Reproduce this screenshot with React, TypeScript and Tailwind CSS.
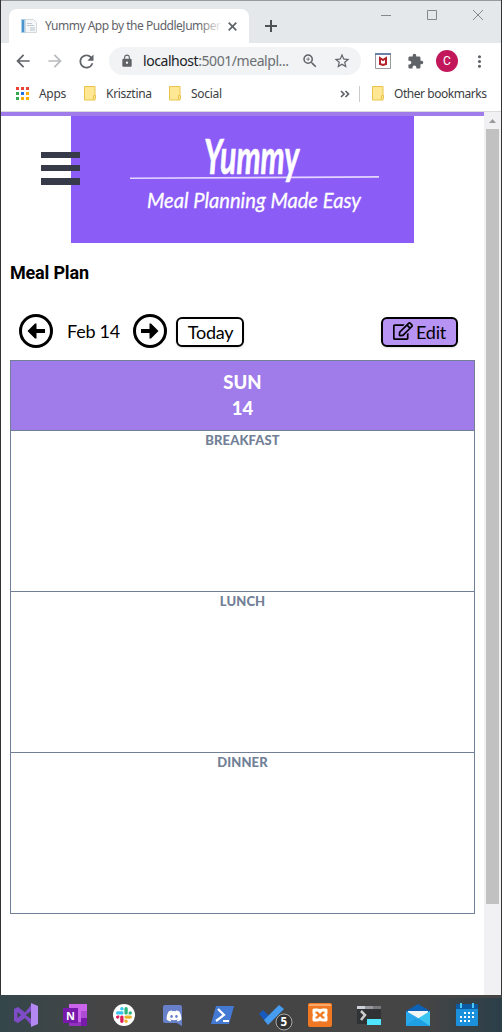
import React from "react";
import { FaDiscord, FaRegEdit } from "react-icons/fa";
import { MdLock, MdArrowBack, MdArrowForward, MdRefresh, MdZoomIn, MdStarBorder, MdMoreVert, MdExtension } from "react-icons/md";

const appColors = ["bg-[#ea4335]", "bg-[#ea4335]", "bg-[#ea4335]", "bg-[#34a853]", "bg-[#1a73e8]", "bg-[#fbad04]", "bg-[#34a853]", "bg-[#fbad04]", "bg-[#fbad04]"];

const slackColors = ["#36c5f0", "#2eb67d", "#ecb22e", "#e01e5a"];

function Folder() {
  return (
    <svg width="13" height="15" viewBox="0 0 13 15" className="shrink-0">
      <path d="M.5.5h10.500v13.500h-10.500z" fill="#ffe793" stroke="#e9c34b" />
      <path d="M9.500 9.500h2v3l-1 1h-1z" fill="#ffe793" stroke="#e9c34b" />
    </svg>
  );
}

function TitleBar() {
  return (
    <div className="flex h-[43px] border-t border-[#96999d] bg-[#e4e8eb]">
      <div className="ml-2 mt-2 flex h-[34px] w-[240px] items-center rounded-t-lg bg-white pl-[12px]">
        <svg width="16" height="16" viewBox="0 0 16 16" className="shrink-0">
          <path d="M0 1h5v14H0z" fill="#a9cfea" />
          <path d="M1 2h2v12H1z" fill="#4b95cc" />
          <path d="M4.500 1.500h8l3 3v10h-11z" fill="#f5f6f8" stroke="#d3d8dd" />
          <path d="M6 5.500h5M6 7.500h7" stroke="#c3cad1" />
          <path d="M9 9h5v4H9z" fill="#d4dce4" />
        </svg>
        <div className="relative ml-2 w-[178px] shrink-0">
          <svg width="178" height="16" className="block"><text x="0" y="12" textLength="176" fill="#5f6368" fontSize="12">Yummy App by the PuddleJumper</text></svg>
          <div className="absolute inset-y-0 right-0 w-6 bg-linear-to-r from-transparent to-white" />
        </div>
        <svg width="9" height="9" viewBox="0 0 9 9" className="ml-[5px] shrink-0" stroke="#5f6368" strokeWidth="1.700"><path d="M.7.7l7.600 7.600M8.300.7L.7 8.300" /></svg>
      </div>
      <svg width="12" height="12" viewBox="0 0 12 12" className="ml-[16px] mt-[19px] shrink-0" stroke="#4d5156" strokeWidth="2"><path d="M6 0v12M0 6h12" /></svg>
      <svg width="104" height="12" viewBox="0 0 104 12" className="ml-[104px] mt-[8px] shrink-0" fill="none" stroke="#85888b">
        <path d="M0 6.500h10M46.500 1.500h9v9h-9zM92 1l10 10M102 1l-10 10" />
      </svg>
    </div>
  );
}

function AddressBar() {
  return (
    <div className="flex h-[37px] items-center bg-white pb-px text-[#5f6368]">
      <MdArrowBack className="ml-[12px] size-[20px]" />
      <MdArrowForward className="ml-[12px] size-[20px] text-[#b8babd]" />
      <MdRefresh className="ml-[11px] size-[21px]" />
      <div className="ml-[12px] flex h-7 w-[252px] items-center rounded-full bg-[#f1f3f4]">
        <MdLock className="ml-[11px] size-[14px]" />
        <svg width="148" height="20" className="ml-[9px]"><text x="0" y="15" fontSize="14" textLength="146" fill="#6b6f73"><tspan fill="#202124">localhost</tspan>:5001/mealpl...</text></svg>
        <MdZoomIn className="ml-[10px] size-[18px]" />
        <MdStarBorder className="ml-[14px] size-[18px]" />
      </div>
      <svg width="16" height="16" viewBox="0 0 16 16" className="ml-[14px]">
        <path d="M.5.5h15v15H.5z" fill="#fff" stroke="#96999d" /><path d="M0 0h16v2H0z" fill="#6b82a8" />
        <path d="M5 5l3 2 3-2v6l-3 1-3-1z" fill="none" stroke="#b3222a" strokeWidth="2" />
      </svg>
      <MdExtension className="ml-[16px] size-[17px]" />
      <div className="ml-[12px] flex size-[22px] items-center justify-center rounded-full bg-[#c2185b] font-[Roboto] text-[12px] text-white">C</div>
      <MdMoreVert className="ml-[12px] size-[19px]" />
    </div>
  );
}

function Bookmarks() {
  return (
    <div className="flex h-[32px] items-center border-b border-[#d9dbdc] bg-white pb-[4px] text-[12px] text-[#3c4043]">
      <div className="ml-[15px] grid grid-cols-3 gap-[2px]">{appColors.map((c, i) => <i key={i} className={`size-[3px] ${c}`} />)}</div>
      <span className="ml-[10px] w-[27px] tracking-[-0.3px]">Apps</span>
      <div className="ml-[18px]"><Folder /></div><span className="ml-[9px] w-[45px] tracking-[-0.3px]">Krisztina</span>
      <div className="ml-[18px]"><Folder /></div><span className="ml-[9px] w-[32px] tracking-[-0.3px]">Social</span>
      <svg width="10" height="8" viewBox="0 0 10 8" className="ml-[117px]" fill="none" stroke="#5f6368" strokeWidth="1.700"><path d="M1 1l3 3-3 3M5.500 1l3 3-3 3" /></svg>
      <div className="ml-[9px] h-4 w-px bg-[#c8cacd]" />
      <div className="ml-[12px]"><Folder /></div><span className="ml-[9px] whitespace-nowrap tracking-[-0.45px]">Other bookmarks</span>
    </div>
  );
}

function Banner() {
  return (
    <header className="relative h-[131px] border-t-4 border-[#a07bea]">
      <svg width="343" height="127" viewBox="0 0 343 127" className="ml-[70px] block bg-[#8b5cf6]" fill="white" stroke="white" strokeLinejoin="round">
        <path d="M59 61.500L308 60v1.800L59 63z" fill="#e3d5ff" stroke="none" />
        <text transform="translate(133 58) scale(.8 1.150)" fontFamily="Lato, sans-serif" fontSize="42" fontWeight="700" fontStyle="italic" textLength="119" lengthAdjust="spacingAndGlyphs" strokeWidth=".6">Yummy</text>
        <text x="76" y="92" fontFamily="Lato, sans-serif" fontSize="22" fontStyle="italic" textLength="214" lengthAdjust="spacingAndGlyphs" strokeWidth=".3">Meal Planning Made Easy</text>
      </svg>
      <button aria-label="Menu" className="absolute left-[40px] top-[36px] flex h-[33px] w-[39px] flex-col justify-between">
        <i className="block h-[6px] w-full bg-[#373a49]" /><i className="block h-[6px] w-full bg-[#373a49]" /><i className="block h-[7px] w-full bg-[#373a49]" />
      </button>
    </header>
  );
}

function CircleArrow({ flip = false }: { flip?: boolean }) {
  return (
    <svg width="34" height="34" viewBox="0 0 34 34" className={flip ? "-scale-x-100" : ""}>
      <circle cx="17" cy="17" r="15.500" fill="none" stroke="black" strokeWidth="3" />
      <path d="M8.500 17l7.500-7.500h1.500V15H26v4h-8.500v5.500H16z" fill="black" />
    </svg>
  );
}

function Planner() {
  return (
    <main className="px-[9px]">
      <h1 className="pt-[16px] font-[Roboto] text-[18px] font-bold leading-[27px] tracking-[-0.18px]">Meal Plan</h1>
      <div className="mt-[28px] flex h-[34px] items-center font-[Lato] text-[18px] leading-6 tracking-[-0.25px] text-black">
        <div className="ml-[9px]"><CircleArrow /></div>
        <span className="ml-[14px] w-[52px] whitespace-nowrap">Feb 14</span>
        <div className="ml-[14px]"><CircleArrow flip /></div>
        <button className="relative top-[1px] ml-[9px] flex h-[30px] w-[68px] items-center justify-center rounded-md border-2 border-black bg-white pl-px shadow-sm">Today</button>
        <button className="relative top-[1px] ml-auto mr-[17px] flex h-[30px] w-[77px] items-center justify-center gap-[3px] rounded-md border-2 border-black bg-[#b794f4] shadow-sm"><FaRegEdit className="relative -top-px size-[20px]" />Edit</button>
      </div>
      <section className="mt-[12px] border border-[#718096] text-center font-[Lato]">
        <div className="h-[70px] border-b border-[#718096] bg-[#a07bea] pt-[8px] text-[18.500px] font-black leading-[26px] text-white"><div>SUN</div><div>14</div></div>
        {["BREAKFAST", "LUNCH", "DINNER"].map((m) => (
          <div key={m} className="h-[161px] border-b border-[#718096] text-[13px] font-black leading-[19px] tracking-[0.1px] text-[#718096] last:h-[160px] last:border-b-0">{m}</div>
        ))}
      </section>
    </main>
  );
}

function Taskbar() {
  return (
    <footer className="flex h-[37px] items-center bg-linear-to-r from-[#34464b] from-0% via-[#454545] via-20% to-[#454545] to-85% pt-[3px]">
      <svg width="502" height="34" viewBox="0 998 502 34">
        <defs><linearGradient id="edge"><stop offset="0" stopColor="#454545" /><stop offset="1" stopColor="#2b3f49" /></linearGradient></defs>
        <rect x="425" y="990" width="77" height="42" fill="url(#edge)" />
        <path d="M14 1009l4-2 7 5.500 7-8.500v6.500l-6.500 4.500 6.500 4.500v6.500l-7-8-7 5-4-2zM17.500 1012v6l3.500-3z" fill="#7f4cc7" fillRule="evenodd" /><path d="M31 1003l7 3v18l-7 3z" fill="#b488f2" />
        <path d="M69 1004h18v22H69z" fill="#ca64ea" /><path d="M81 1011h6v7h-6z" fill="#ae4bd5" /><path d="M81 1018h6v8h-6z" fill="#7719aa" /><path d="M69 1022h12v4H69z" fill="#9332bf" /><path d="M63 1008h15v15H63z" fill="#7719aa" /><text x="66" y="1020" fill="white" fontSize="11" fontWeight="700">N</text>
        <circle cx="124" cy="1015" r="11" fill="white" />
        <g transform="translate(116 1007) scale(.13)">
          {slackColors.map((color, i) => (
            <path key={color} transform={`rotate(${i * 90} 61.4 61.4)`} fill={color} d="M45.200 25.800c-7.100 0-12.900-5.800-12.900-12.900S38.100 0 45.200 0s12.900 5.800 12.900 12.900v12.900zM45.200 32.300c7.100 0 12.900 5.800 12.900 12.900s-5.800 12.900-12.900 12.900H12.900C5.800 58.100 0 52.300 0 45.200s5.800-12.900 12.900-12.900z" />
          ))}
        </g>
        <rect x="163" y="1005" width="19" height="18" rx="2" fill="#6780c9" /><path d="M175 1022h7v4z" fill="#6780c9" /><FaDiscord x="166" y="1008" width="14" height="13" fill="white" />
        <path d="M216 1006h18l-5 18h-18z" fill="#4479d4" /><path d="M218 1009l6 6-8 6M223 1021h6" fill="none" stroke="white" strokeWidth="2.200" />
        <path d="M259 1014l4-4 6 6-4 5z" fill="#185abd" /><path d="M264 1020l15-15 5 4-16 16z" fill="#469cf0" /><circle cx="284" cy="1022" r="8" fill="#333" stroke="#aaa" /><text x="280.500" y="1026" fontSize="11.500" fontWeight="700" fill="white">5</text>
        <rect x="308" y="1003" width="24" height="24" rx="2" fill="#f17822" /><path d="M309 1004h22v2h-22z" fill="#f9a86c" /><path d="M314 1010h3q3 0 3 2 0-2 3-2h3v3q0 2-2 2 2 0 2 2v3h-3q-3 0-3-2 0 2-3 2h-3v-3q0-2 2-2-2 0-2-2z" fill="none" stroke="white" strokeWidth="3" strokeLinejoin="round" />
        <path d="M357 1006h24v18h-24z" fill="#303234" /><path d="M357 1006h24v3h-24z" fill="#77797d" /><path d="M357 1006h8v3h-8z" fill="#ccd0d8" /><path d="M365 1006h8v3h-8z" fill="#97999d" /><path d="M361 1011l4 4-4 5" fill="none" stroke="#ccc" strokeWidth="2.500" /><path d="M367 1019h14v6h-14z" fill="#50e6ff" />
        <path d="M406 1011l12-7 12 7v3h-24z" fill="#0d62b8" /><path d="M408 1011h20v4l-10 5-10-5z" fill="#f4f5f6" /><path d="M406 1011l12 7-12 8z" fill="#28a8ea" /><path d="M430 1011v15h-24z" fill="#3bc5f0" /><path d="M406 1026v-1l12-7 12 8z" fill="#20a0e4" />
        <rect x="456" y="1004" width="22" height="22" rx="1" fill="#1b91de" /><path d="M456 1004h22v5h-22z" fill="#0c59a4" /><path d="M461 1003v5M473 1003v5" stroke="#4bcaff" strokeWidth="2" /><path d="M464 1013h10M460 1017h14M460 1021h10" stroke="white" strokeWidth="2" strokeDasharray="2 2" />
      </svg>
    </footer>
  );
}

export default function App() {
  return (
    <div className="h-[1032px] w-[502px] overflow-hidden bg-white font-['Noto_Sans','Open_Sans',sans-serif]">
      <div className="flex h-[995px] flex-col border-x border-[#333]">
        <TitleBar /><AddressBar /><Bookmarks />
        <div className="flex min-h-0 flex-1">
          <div className="min-w-0 flex-1"><Banner /><Planner /></div>
          <aside className="flex w-[17px] flex-col items-center bg-[#f1f1f3]"><svg width="7" height="4" viewBox="0 0 7 4" className="mt-[7px]"><path d="M0 4l3.500-4L7 4z" fill="#9b9b9b" /></svg><div className="mt-[6px] h-[775px] w-[13px] bg-[#c1c1c1]" /></aside>
        </div>
      </div>
      <Taskbar />
    </div>
  );
}
